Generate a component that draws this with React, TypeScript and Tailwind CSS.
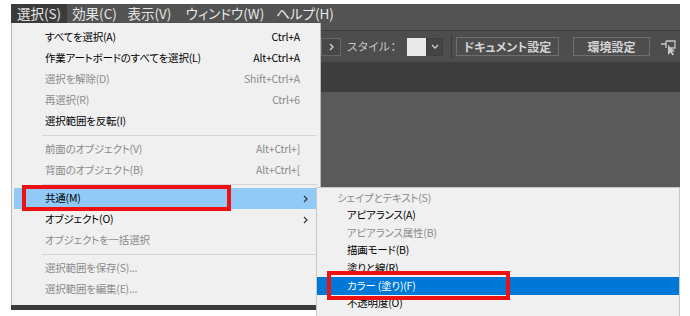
import React from "react";

type Item =
  | { sep: true }
  | { label: string; sc?: string; off?: boolean; sub?: boolean; active?: boolean };

const mainItems: Item[] = [
  { label: "すべてを選択(A)", sc: "Ctrl+A" },
  { label: "作業アートボードのすべてを選択(L)", sc: "Alt+Ctrl+A" },
  { label: "選択を解除(D)", sc: "Shift+Ctrl+A", off: true },
  { label: "再選択(R)", sc: "Ctrl+6", off: true },
  { label: "選択範囲を反転(I)" },
  { sep: true },
  { label: "前面のオブジェクト(V)", sc: "Alt+Ctrl+]", off: true },
  { label: "背面のオブジェクト(B)", sc: "Alt+Ctrl+[", off: true },
  { sep: true },
  { label: "共通(M)", sub: true, active: true },
  { label: "オブジェクト(O)", sub: true },
  { label: "オブジェクトを一括選択", off: true },
  { sep: true },
  { label: "選択範囲を保存(S)...", off: true },
  { label: "選択範囲を編集(E)...", off: true },
];

const subItems = [
  { label: "シェイプとテキスト(S)", off: true, head: true },
  { label: "アピアランス(A)" },
  { label: "アピアランス属性(B)", off: true },
  { label: "描画モード(B)" },
  { label: "塗りと線(R)" },
  { label: "カラー (塗り)(F)", active: true },
  { label: "不透明度(O)" },
];

const menubar = [
  { label: "選択(S)", w: "w-[56px]", active: true },
  { label: "効果(C)", w: "w-[55px]" },
  { label: "表示(V)", w: "w-[55px]" },
  { label: "ウィンドウ(W)", w: "w-[96px]" },
  { label: "ヘルプ(H)", w: "w-[64px]" },
];

const Chevron = () => (
  <svg width="5" height="8" viewBox="0 0 5 8">
    <path d="M1 1 L4 4 L1 7" fill="none" stroke="#333" strokeWidth="1.2" />
  </svg>
);

const App = () => {
  return (
    <div className="relative w-[690px] h-[316px] overflow-hidden bg-white pt-[4px] pl-[11px] pr-[10px] pb-[6px] font-['Noto_Sans_CJK_JP',sans-serif] [font-feature-settings:'palt']">
      <div className="flex h-full flex-col bg-[#595959]">
        {/* メニューバー */}
        <div className="flex h-[19px] bg-[#535353] text-[13.5px] leading-none text-[#e6e6e6]">
          {menubar.map((m) => (
            <div
              key={m.label}
              className={`${m.w} flex items-center justify-center ${m.active ? "bg-[#3b3b3b]" : ""}`}
            >
              {m.label}
            </div>
          ))}
        </div>
        <div className="h-[7px] bg-[#535353]" />
        <div className="h-px bg-[#3a3a3a]" />

        {/* コントロールバー */}
        <div className="flex h-[31px] items-center justify-end bg-[#4d4d4d] pr-[3px] text-[#c4c4c4]">
          <div className="flex h-[18px] w-[20px] items-center justify-center border border-[#666] bg-[#474747]">
            <svg width="5" height="8" viewBox="0 0 5 8">
              <path d="M1 1 L4 4 L1 7" fill="none" stroke="#d0d0d0" strokeWidth="1.4" />
            </svg>
          </div>
          <div className="ml-[6px] w-[54px] text-[11.5px] leading-none tracking-[0.5px]">スタイル：</div>
          <div className="ml-[6px] h-[18px] w-[19px] bg-[#e9e9e9]" />
          <div className="flex h-[18px] w-[17px] items-center justify-center border border-[#3f3f3f] bg-[#444]">
            <svg width="8" height="5" viewBox="0 0 8 5">
              <path d="M1 1 L4 4 L7 1" fill="none" stroke="#d0d0d0" strokeWidth="1.3" />
            </svg>
          </div>
          <div className="ml-[8px] h-[24px] w-px bg-[#3a3a3a]" />
          <div className="ml-[4px] flex h-[19px] w-[103px] items-center justify-center border border-[#6f6f6f] text-[12px] font-bold leading-none text-[#d4d4d4]">
            ドキュメント設定
          </div>
          <div className="ml-[14px] flex h-[19px] w-[77px] items-center justify-center border border-[#6f6f6f] text-[12px] font-bold leading-none text-[#d4d4d4]">
            環境設定
          </div>
          <svg className="ml-[9px]" width="18" height="18" viewBox="0 0 18 18">
            <path d="M2 6 H7 M7 3 V10 M7 3 H16 V10 H12" fill="none" stroke="#c8c8c8" strokeWidth="1.3" />
            <path d="M9 7 L9 17 L11.5 14.5 L13.5 17.5 L15 16.5 L13 13.5 L16 13.5 Z" fill="#c8c8c8" />
          </svg>
        </div>

        <div className="h-[30px] bg-[#3d3d3d]" />
        <div className="flex-1 bg-[#5a5a5a]" />
        <div className="h-[5px] bg-[#3a3a3a]" />
      </div>

      {/* 選択メニュー */}
      <div className="absolute left-[11px] top-[23px] h-[282px] w-[310px] border-l border-r border-[#b9b9b9] bg-[#f0f0f0] pt-[4px] text-[10.5px] leading-none tracking-[-0.2px]">
        {mainItems.map((it, i) =>
          "sep" in it ? (
            <div key={i} className="flex h-[7px] items-center pl-[30px] pr-[3px]">
              <div className="h-px w-full bg-[#d6d6d6]" />
            </div>
          ) : (
            <div
              key={i}
              className={`mx-[2px] flex h-[21px] items-center pl-[31px] pr-[18px] ${
                it.active ? "bg-[#91c9f7]" : ""
              } ${it.off ? "text-[#8b8b8b]" : "text-black"}`}
            >
              <span>{it.label}</span>
              <span className="ml-auto">{it.sc}</span>
              {it.sub && (
                <span className="ml-auto mr-[-8px]">
                  <Chevron />
                </span>
              )}
            </div>
          )
        )}
      </div>

      {/* 共通サブメニュー */}
      <div className="absolute left-[316px] top-[187px] h-[140px] w-[364px] border border-[#c8c8c8] bg-[#f0f0f0] pt-[1px] text-[10.5px] leading-none tracking-[-0.2px]">
        {subItems.map((it) => (
          <div
            key={it.label}
            className={`flex h-[17.6px] items-center ${it.head ? "pl-[20px]" : "pl-[30px]"} ${
              it.active ? "bg-[#0078d7] text-white" : it.off ? "text-[#8b8b8b]" : "text-black"
            }`}
          >
            {it.label}
          </div>
        ))}
      </div>

      {/* 赤枠 */}
      <div className="absolute left-[22px] top-[185px] h-[26px] w-[209px] border-4 border-[#ee1111]" />
      <div className="absolute left-[327px] top-[271px] h-[29px] w-[183px] border-4 border-[#ee1111]" />
    </div>
  );
};

export default App;
